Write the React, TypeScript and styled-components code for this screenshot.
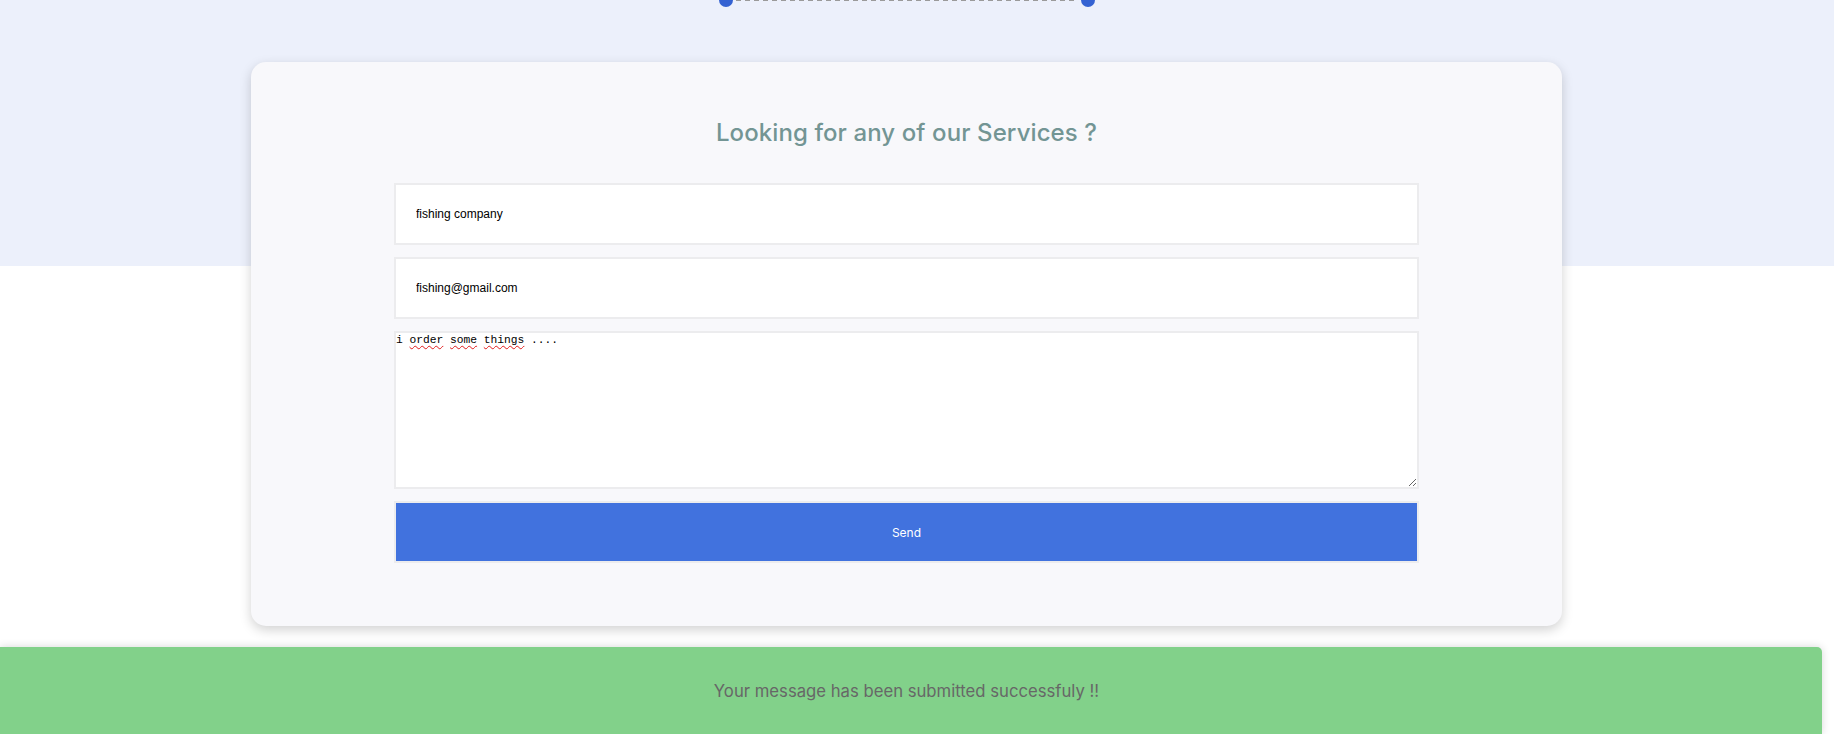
import React from "react";
import styled, { createGlobalStyle } from "styled-components";

const Global = createGlobalStyle`
  html, body {
    margin: 0;
    padding: 0;
    overflow: hidden;
    background: #ffffff;
  }
  * { box-sizing: border-box; }
`;

const Page = styled.main`
  width: 100%;
  height: 734px;
  background: linear-gradient(#ecf0fb 0, #ecf0fb 266px, #ffffff 266px);
  display: flex;
  flex-direction: column;
`;

const Column = styled.div`
  width: 1813px;
  display: flex;
  flex-direction: column;
  align-items: center;
`;

const Timeline = styled.div`
  width: 376px;
  height: 14px;
  margin-top: -7px;
  display: flex;
  align-items: center;
`;

const Dot = styled.span`
  width: 14px;
  height: 14px;
  border-radius: 50%;
  background: #3462d2;
  flex: none;
`;

const DashLine = styled.span`
  flex: 1;
  height: 2px;
  margin: 0 3px;
  background: repeating-linear-gradient(
    to right,
    #9a9a9a 0,
    #9a9a9a 5px,
    transparent 5px,
    transparent 9px
  );
`;

const Card = styled.section`
  margin-top: 55px;
  width: 1311px;
  background: #f8f8fb;
  border-radius: 15px;
  box-shadow: 0 4px 12px rgba(0, 0, 0, 0.18);
  padding: 51px 143px 63px;
  display: flex;
  flex-direction: column;
`;

const Title = styled.h2`
  margin: 0 0 30px;
  height: 40px;
  line-height: 40px;
  text-align: center;
  font-family: "Inter", "Open Sans", sans-serif;
  font-weight: 500;
  font-size: 24px;
  letter-spacing: 0.1px;
  color: #739594;
`;

const Form = styled.form`
  display: flex;
  flex-direction: column;
  gap: 12px;
`;

const Field = styled.input`
  height: 62px;
  width: 100%;
  border: 2px solid #ececee;
  background: #ffffff;
  padding: 0 20px;
  font-family: "Liberation Sans", Arial, sans-serif;
  font-size: 12px;
  color: #000;
  outline: none;
`;

const AreaWrap = styled.div`
  position: relative;
  height: 158px;
`;

const Area = styled.textarea`
  display: block;
  width: 100%;
  height: 100%;
  border: 2px solid #ececee;
  background: #ffffff;
  padding: 0;
  margin: 0;
  font-family: "Liberation Mono", "Courier New", monospace;
  font-size: 11.25px;
  line-height: 14px;
  color: #000;
  outline: none;
`;

const SpellLayer = styled.div`
  position: absolute;
  left: 2px;
  top: 2px;
  padding: 0;
  pointer-events: none;
  font-family: "Liberation Mono", "Courier New", monospace;
  font-size: 11.25px;
  line-height: 14px;
  color: transparent;
  white-space: pre;
`;

const Miss = styled.span`
  text-decoration: underline wavy #e01b1b;
  text-decoration-thickness: 1px;
  text-underline-offset: 2px;
`;

const SendButton = styled.button`
  height: 62px;
  width: 100%;
  border: 2px solid #ececee;
  background: #4172de;
  color: #ffffff;
  font-family: "Inter", "Open Sans", sans-serif;
  font-size: 12px;
  cursor: pointer;
`;

const Toast = styled.div`
  margin-top: 21px;
  width: calc(100% - 12px);
  height: 100px;
  background: #82d18a;
  border-radius: 0 5px 0 0;
  box-shadow: 0 0 9px rgba(0, 0, 0, 0.16);
  padding-top: 30px;
`;

const ToastText = styled.p`
  margin: 0;
  width: 1813px;
  text-align: center;
  line-height: 28px;
  font-family: "Inter", "Open Sans", sans-serif;
  font-size: 16.7px;
  color: #676767;
`;

export default function App() {
  return (
    <>
      <Global />
      <Page>
        <Column>
          <Timeline>
            <Dot />
            <DashLine />
            <Dot />
          </Timeline>
          <Card>
            <Title>Looking for any of our Services ?</Title>
            <Form onSubmit={(e) => e.preventDefault()}>
              <Field type="text" defaultValue="fishing company" />
              <Field type="email" defaultValue="fishing@gmail.com" />
              <AreaWrap>
                <Area defaultValue="i order some things ...." spellCheck={false} />
                <SpellLayer aria-hidden="true">
                  {"i "}
                  <Miss>order</Miss>
                  {" "}
                  <Miss>some</Miss>
                  {" "}
                  <Miss>things</Miss>
                  {" ...."}
                </SpellLayer>
              </AreaWrap>
              <SendButton type="submit">Send</SendButton>
            </Form>
          </Card>
        </Column>
        <Toast>
          <ToastText>Your message has been submitted successfuly !!</ToastText>
        </Toast>
      </Page>
    </>
  );
}
